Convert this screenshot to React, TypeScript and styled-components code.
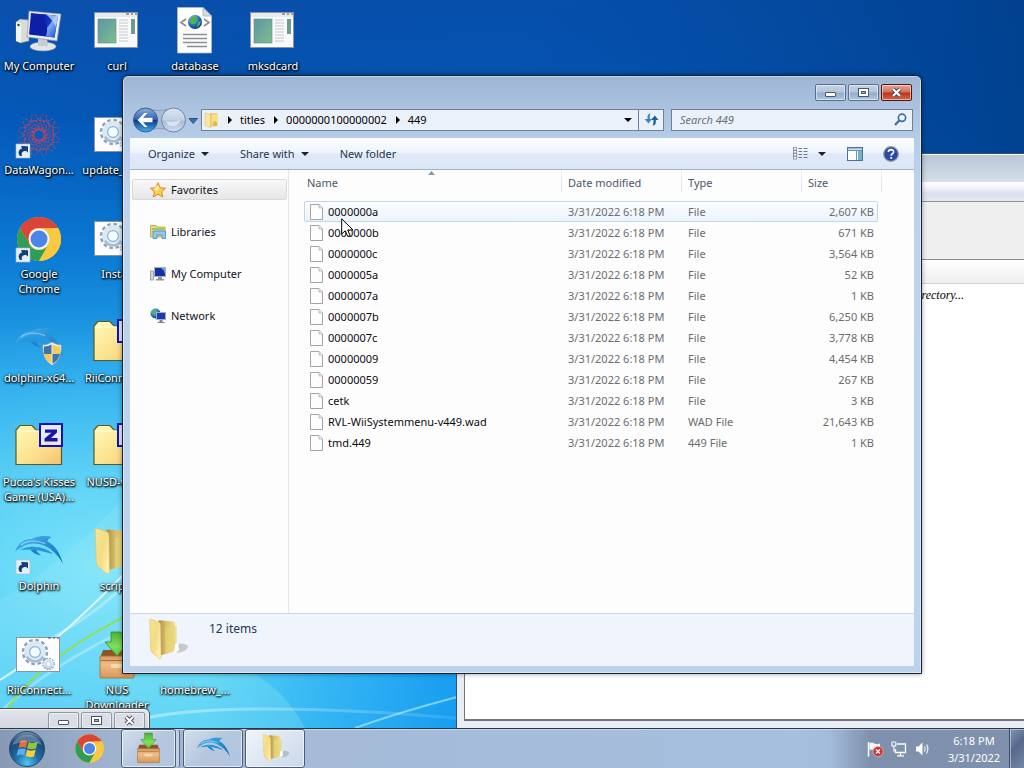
import React from "react";
import styled, { createGlobalStyle, css } from "styled-components";

const GlobalStyle = createGlobalStyle`
  *, *::before, *::after { box-sizing: border-box; }
  body { margin: 0; overflow: hidden; }
  body, button, input { font-family: "Noto Sans", "Open Sans", sans-serif; font-size: 11px; line-height: 15px; }
  button { margin: 0; padding: 0; border: 0; background: none; color: inherit; }
  a { color: inherit; text-decoration: none; }
  svg { display: block; flex: none; overflow: visible; }
`;

/* ---------- desktop ---------- */

const Screen = styled.div`
  display: flex;
  flex-direction: column;
  height: 100vh;
  min-height: 480px;
  overflow: hidden;
`;

const Desktop = styled.main`
  position: relative;
  flex: 1;
  min-height: 0;
  overflow: hidden;
  background: linear-gradient(180deg, #0a50ac 0%, #0558b8 16%, #0a78d2 34%, #27a6ea 52%, #4cc6f4 68%, #55d0f6 82%, #46c8f6 100%);
`;

const Wallpaper = styled.svg`
  position: absolute;
  inset: 0;
  width: 100%;
  height: 100%;
`;

const IconGrid = styled.ul`
  position: relative;
  display: grid;
  grid-auto-columns: 78px;
  grid-auto-rows: 104px;
  margin: 0;
  padding: 8px 0 0;
  list-style: none;
`;

const IconCell = styled.li<{ $col: number; $row: number }>`
  grid-column: ${(p) => p.$col};
  grid-row: ${(p) => p.$row};
`;

const Shortcut = styled.a`
  display: flex;
  flex-direction: column;
  align-items: center;
  gap: 2px;
  color: #fff;
  text-align: center;
  text-shadow: 0 1px 2px #000, 1px 1px 2px #000, 0 0 3px rgba(0, 0, 0, 0.7);
`;

const IconSlot = styled.span`
  display: block;
  width: 48px;
  height: 48px;
`;

const ShortcutLabel = styled.span`
  white-space: pre;
`;

/* ---------- window frames ---------- */

const WindowFrame = styled.section`
  position: absolute;
  display: flex;
  flex-direction: column;
  border: 1px solid #16222f;
  border-radius: 6px 6px 0 0;
`;

const ExplorerFrame = styled(WindowFrame)`
  top: 75px;
  right: 102px;
  bottom: 54px;
  left: 122px;
  padding: 0 7px 7px;
  background: linear-gradient(180deg, #9cb5d3 0, #adc4e0 34px, #b5cce8 62px, #bed2ec 110px, #bdd3ec 100%);
  box-shadow: inset 0 0 0 1px rgba(255, 255, 255, 0.45), 0 0 5px rgba(0, 0, 0, 0.4);
`;

const ConsoleFrame = styled(WindowFrame)`
  top: 153px;
  right: -8px;
  bottom: -1px;
  left: 456px;
  padding: 0 6px 7px 7px;
  border-color: #34506c;
  background: linear-gradient(180deg, #b9c6d6 0, #d5dfea 28px, #dbe3ee 60px, #e9eef4 100%);
  box-shadow: inset 0 1px 0 #fff;
`;

const DownloaderFrame = styled(WindowFrame)`
  bottom: -8px;
  left: -8px;
  width: 158px;
  height: 28px;
  padding: 3px 4px 0;
  border-color: #4b4f57;
  background: linear-gradient(180deg, #e3e5ea, #cdd3dd);
  box-shadow: inset 0 0 0 1px #f6f7f9;
`;

const CaptionButtons = styled.div`
  display: flex;
  justify-content: flex-end;
  gap: 2px;
`;

const CaptionButton = styled.button<{ $tone?: "glass" | "close" | "plain" }>`
  display: flex;
  align-items: center;
  justify-content: center;
  width: 31px;
  height: 17px;
  border: 1px solid #5c6f8a;
  border-radius: 2px;
  box-shadow: inset 0 0 0 1px rgba(255, 255, 255, 0.5);
  background: linear-gradient(180deg, #c4d3e6 0%, #b3c6de 48%, #93abca 52%, #b0c6e2 100%);
  ${(p) =>
    p.$tone === "close" &&
    css`
      border-color: #5a1210;
      background: linear-gradient(180deg, #e3a594 0%, #d0705c 48%, #b8331c 52%, #d2694a 100%);
    `}
  ${(p) =>
    p.$tone === "plain" &&
    css`
      border-color: #9097a4;
      background: #d9dde5;
    `}
`;

/* ---------- explorer ---------- */

const TitleBar = styled.header`
  padding: 8px 2px 0 0;
  height: 32px;
`;

const NavBar = styled.div`
  display: flex;
  align-items: center;
  height: 23px;
  margin: 0 1px 7px 2px;
`;

const HistoryButtons = styled.div`
  display: flex;
  align-items: center;
  width: 69px;
`;

const AddressBar = styled.nav`
  display: flex;
  flex: 1;
  align-items: center;
  height: 22px;
  border: 1px solid #6f8198;
  background: #ebf1fa;
  color: #000;
`;

const Crumbs = styled.ol`
  display: flex;
  flex: 1;
  align-items: center;
  margin: 0;
  padding: 0 0 0 2px;
  list-style: none;
`;

const Crumb = styled.li`
  display: flex;
  align-items: center;
  gap: 8px;
  margin-right: 9px;
`;

const AddressButton = styled.button<{ $divided?: boolean }>`
  display: flex;
  align-items: center;
  justify-content: center;
  width: ${(p) => (p.$divided ? "25px" : "20px")};
  height: 20px;
  border-left: ${(p) => (p.$divided ? "1px solid #6f8198" : "0")};
`;

const SearchBox = styled.label`
  display: flex;
  align-items: center;
  width: 242px;
  height: 22px;
  margin-left: 7px;
  padding: 0 5px 0 8px;
  border: 1px solid #6f8198;
  background: #ebf1fa;
`;

const SearchInput = styled.input`
  flex: 1;
  min-width: 0;
  padding: 0;
  border: 0;
  outline: 0;
  background: transparent;
  &::placeholder { color: #6b727c; font-style: italic; opacity: 1; }
`;

const Toolbar = styled.div`
  display: flex;
  align-items: center;
  height: 32px;
  padding: 0 15px 0 18px;
  border-bottom: 1px solid #a3b2c8;
  background: linear-gradient(180deg, #fbfdff 0%, #eff5fd 46%, #dfe9f7 52%, #dce7f6 100%);
  color: #27374f;
`;

const ToolButton = styled.button`
  display: flex;
  align-items: center;
  gap: 6px;
  margin-right: 31px;
`;

const ToolIcons = styled.div`
  display: flex;
  align-items: center;
  gap: 20px;
  margin-left: auto;
`;

const ViewButton = styled.button`
  display: flex;
  align-items: center;
  gap: 10px;
  margin-right: 1px;
`;

const Body = styled.div`
  display: flex;
  flex: 1;
  min-height: 0;
  background: #fdfdfe;
`;

const Sidebar = styled.nav`
  width: 159px;
  padding: 9px 1px 0 2px;
  border-right: 1px solid #e0e8f2;
`;

const Places = styled.ul`
  display: flex;
  flex-direction: column;
  gap: 21px;
  margin: 0;
  padding: 0;
  list-style: none;
`;

const Place = styled.a<{ $active?: boolean }>`
  display: flex;
  align-items: center;
  gap: 5px;
  height: 21px;
  padding-left: 17px;
  border: 1px solid transparent;
  border-radius: 2px;
  color: #10151c;
  ${(p) =>
    p.$active &&
    css`
      border-color: #d9d9d9;
      background: linear-gradient(180deg, #f8f8f8, #e7e7e7);
    `}
`;

const FileArea = styled.div`
  flex: 1;
  padding-left: 15px;
  overflow: hidden;
`;

const FileTable = styled.table`
  width: 574px;
  table-layout: fixed;
  border-collapse: separate;
  border-spacing: 0;
  color: #6c6c6c;
`;

const HeadCell = styled.th<{ $width: number; $last?: boolean }>`
  position: relative;
  width: ${(p) => p.$width}px;
  height: 31px;
  padding: 4px 6px 11px;
  color: #4d5765;
  font-weight: 400;
  text-align: left;
  &:first-child { padding-left: 3px; }
  &::after {
    content: "";
    position: absolute;
    top: 0;
    right: ${(p) => (p.$last ? "-4px" : "0")};
    width: 1px;
    height: 22px;
    background: linear-gradient(180deg, #eef1f5, #d8dfe8);
  }
`;

const SortMark = styled.svg`
  position: absolute;
  top: 1px;
  left: 48%;
`;

const FileRow = styled.tr<{ $hot?: boolean }>`
  ${(p) =>
    p.$hot &&
    css`
      td {
        border-top: 1px solid #c3d7ea;
        border-bottom: 1px solid #c3d7ea;
        background: linear-gradient(180deg, #fcfdff, #eaf3fc);
      }
      td:first-child { border-left: 1px solid #c3d7ea; border-radius: 2px 0 0 2px; padding-left: 5px; }
      td:last-child { border-right: 1px solid #c3d7ea; border-radius: 0 2px 2px 0; padding-right: 3px; }
    `}
`;

const Cell = styled.td<{ $end?: boolean }>`
  height: 21px;
  padding: 0 4px 0 6px;
  text-align: ${(p) => (p.$end ? "right" : "left")};
  white-space: nowrap;
`;

const FileName = styled.span`
  display: flex;
  align-items: center;
  gap: 5px;
  color: #0c0c0c;
`;

const DetailsPane = styled.footer`
  display: flex;
  height: 53px;
  padding: 0 0 0 18px;
  border-top: 1px solid #ccd6e6;
  background: #f0f4fc;
  color: #25365a;
`;

const DetailsText = styled.p`
  margin: 0;
  padding: 7px 0 0 21px;
  font-size: 12px;
`;

/* ---------- console window ---------- */

const ConsoleTitle = styled.div`
  height: 28px;
`;
const ConsoleMenu = styled.div`
  height: 20px;
  border-bottom: 1px solid #8e929c;
  background: linear-gradient(180deg, #fff 0, #f3f4fa 30%, #dfe0ee 60%, #e6e7f2 100%);
`;
const ConsoleTools = styled.div`
  height: 58px;
  border-bottom: 1px solid #8a8a8a;
  background: #efefef;
`;
const ConsoleTabs = styled.div`
  height: 24px;
  border-bottom: 1px solid #d0d0d0;
  background: linear-gradient(180deg, #fff, #efefef);
`;
const ConsoleBody = styled.div`
  flex: 1;
  padding: 4px 61px 0 0;
  border: solid #6f7680;
  border-width: 0 0 2px 1px;
  background: #fff;
  font-family: "Liberation Serif", serif;
  font-size: 12px;
  font-style: italic;
  text-align: right;
`;

/* ---------- taskbar ---------- */

const Taskbar = styled.footer`
  position: relative;
  display: flex;
  height: 40px;
  border-top: 1px solid #26384c;
  background: linear-gradient(90deg, #8799b4 0, #92a6c2 50px, #9fb3cf 110px, #a5bbd8 310px, #a6bfde 78%, #a3bcdb 81%, #7f90ac 85%, #8091ad 100%);
  box-shadow: inset 0 1px 0 rgba(255, 255, 255, 0.4);
`;

const StartButton = styled.button`
  padding-left: 8px;
`;

const PinnedApp = styled.button`
  padding: 0 16px 0 28px;
`;

const TaskButton = styled.button<{ $active?: boolean; $stacked?: boolean }>`
  display: flex;
  align-items: center;
  justify-content: center;
  width: ${(p) => (p.$stacked ? "55px" : "60px")};
  height: 39px;
  margin-right: ${(p) => (p.$stacked ? "7px" : "2px")};
  border: 1px solid #4c5d75;
  border-radius: 3px;
  background: ${(p) =>
    p.$active
      ? "linear-gradient(135deg, #f1f5fa 0%, #dce6f1 50%, #c9d8ea 100%)"
      : "linear-gradient(135deg, #d3deeb 0%, #b5c7de 50%, #b1c5df 100%)"};
  box-shadow: inset 0 0 0 1px rgba(255, 255, 255, 0.6)
    ${(p) => (p.$stacked ? ", 4px 0 0 -1px #c4d2e4, 5px 0 0 -1px #5a6d87" : "")};
`;

const Tray = styled.div`
  display: flex;
  align-items: center;
  margin-left: auto;
  color: #fff;
`;

const TrayIcons = styled.div`
  display: flex;
  gap: 8px;
`;

const Clock = styled.time`
  width: 70px;
  margin: 0 0 0 8px;
  line-height: 17px;
  text-align: center;
`;

const ShowDesktop = styled.button`
  width: 15px;
  height: 39px;
  border-left: 1px solid #3d4f68;
  background: linear-gradient(135deg, #8195b1 0%, #56698a 45%, #7387a5 100%);
  box-shadow: inset 1px 1px 0 rgba(255, 255, 255, 0.45);
`;

const Pointer = styled.svg`
  position: absolute;
  top: 218px;
  left: 341px;
`;

/* ---------- drawings ---------- */

const Gradients = () => (
  <svg width="0" height="0" style={{ position: "absolute" }} aria-hidden="true">
    <defs>
      <linearGradient id="g-screen" x1="0" y1="0" x2="1" y2="1">
        <stop offset="0" stopColor="#0a1f9c" /><stop offset="0.45" stopColor="#1236c8" /><stop offset="0.5" stopColor="#7fb0f5" /><stop offset="1" stopColor="#1440c8" />
      </linearGradient>
      <linearGradient id="g-app" x1="0" y1="0" x2="1" y2="1">
        <stop offset="0" stopColor="#5f94a8" /><stop offset="1" stopColor="#7cc088" />
      </linearGradient>
      <radialGradient id="g-globe" cx="0.35" cy="0.3" r="0.8">
        <stop offset="0" stopColor="#a8dcf8" /><stop offset="0.5" stopColor="#2474c4" /><stop offset="1" stopColor="#0a2c70" />
      </radialGradient>
      <linearGradient id="g-zip" x1="0" y1="0" x2="1" y2="1">
        <stop offset="0" stopColor="#fffbb8" /><stop offset="0.6" stopColor="#fbe08c" /><stop offset="1" stopColor="#f3c070" />
      </linearGradient>
      <linearGradient id="g-fold-a" x1="0" y1="0" x2="1" y2="0.6">
        <stop offset="0" stopColor="#f6e694" /><stop offset="0.6" stopColor="#f3dc84" /><stop offset="1" stopColor="#fbeeb0" />
      </linearGradient>
      <linearGradient id="g-fold-b" x1="0" y1="0" x2="1" y2="0">
        <stop offset="0" stopColor="#a88c44" /><stop offset="0.45" stopColor="#d8c06a" /><stop offset="1" stopColor="#f0e08c" />
      </linearGradient>
      <linearGradient id="g-dolphin" x1="0" y1="0" x2="1" y2="1">
        <stop offset="0" stopColor="#4ab8f4" /><stop offset="1" stopColor="#0c68b4" />
      </linearGradient>
      <linearGradient id="g-arrow" x1="0" y1="0" x2="0" y2="1">
        <stop offset="0" stopColor="#4fae35" /><stop offset="0.6" stopColor="#7ee05c" /><stop offset="1" stopColor="#5cc443" />
      </linearGradient>
      <linearGradient id="g-crate" x1="0" y1="0" x2="0" y2="1">
        <stop offset="0" stopColor="#d49a60" /><stop offset="0.4" stopColor="#efbd84" /><stop offset="1" stopColor="#d8965a" />
      </linearGradient>
      <radialGradient id="g-orb" cx="0.5" cy="0.9" r="0.9">
        <stop offset="0" stopColor="#4cc8f0" /><stop offset="0.4" stopColor="#1d6aa4" /><stop offset="0.8" stopColor="#1b4470" /><stop offset="1" stopColor="#7d9cbc" />
      </radialGradient>
      <linearGradient id="g-back" x1="0" y1="0" x2="0" y2="1">
        <stop offset="0" stopColor="#8fb0dc" /><stop offset="0.48" stopColor="#2e5fae" /><stop offset="0.52" stopColor="#0b3a8c" /><stop offset="1" stopColor="#40b4ee" />
      </linearGradient>
      <linearGradient id="g-fwd" x1="0" y1="0" x2="0" y2="1">
        <stop offset="0" stopColor="#dbe5f1" /><stop offset="0.5" stopColor="#c1d0e3" /><stop offset="0.55" stopColor="#a9bdd6" /><stop offset="1" stopColor="#cfdef0" />
      </linearGradient>
    </defs>
  </svg>
);

const WallpaperArt = () => (
  <Wallpaper viewBox="0 0 1024 728" preserveAspectRatio="none" aria-hidden="true">
    <defs>
      <linearGradient id="w-top" x1="0" y1="0" x2="1" y2="0">
        <stop offset="0" stopColor="#0048a0" stopOpacity="0" /><stop offset="0.5" stopColor="#0350ac" stopOpacity="0.5" /><stop offset="1" stopColor="#003f8c" stopOpacity="0.9" />
      </linearGradient>
      <radialGradient id="w-glow" cx="0.1" cy="0.78" r="0.35">
        <stop offset="0" stopColor="#8cecfa" stopOpacity="0.75" /><stop offset="1" stopColor="#50d0f8" stopOpacity="0" />
      </radialGradient>
      <linearGradient id="w-sea" x1="0" y1="0" x2="1" y2="0">
        <stop offset="0.2" stopColor="#1a9cf0" stopOpacity="0" /><stop offset="0.45" stopColor="#149af0" stopOpacity="0.95" />
      </linearGradient>
      <linearGradient id="w-beam" x1="0" y1="0" x2="1" y2="0">
        <stop offset="0" stopColor="#fff" stopOpacity="0.4" /><stop offset="1" stopColor="#fff" stopOpacity="0.1" />
      </linearGradient>
    </defs>
    <rect width="1024" height="200" fill="url(#w-top)" />
    <rect width="1024" height="728" fill="url(#w-glow)" />
    <rect y="400" width="1024" height="328" fill="url(#w-sea)" />
    <path d="M0 600Q70 560 130 490V728H0Z" fill="#fff" opacity="0.08" />
    <path d="M120 728V650Q260 640 305 728Z" fill="#a8f4f0" opacity="0.22" />
    <path d="M0 680Q50 650 128 570" fill="none" stroke="#fff" strokeOpacity="0.7" strokeWidth="2" />
    <path d="M36 646Q90 620 130 580" fill="none" stroke="#fff" strokeOpacity="0.3" strokeWidth="3" />
    <path d="M0 712Q50 665 130 628" fill="none" stroke="#fff" strokeOpacity="0.3" strokeWidth="3" />
    <path d="M6 710Q45 655 130 614" fill="none" stroke="#8fe04a" strokeOpacity="0.9" strokeWidth="2" />
    <path d="M145 718Q240 700 456 718" fill="none" stroke="url(#w-beam)" strokeWidth="3" />
    <path d="M355 728Q400 712 457 697" fill="none" stroke="#bff0ff" strokeOpacity="0.6" strokeWidth="2" />
  </Wallpaper>
);

const LinkBadge = () => (
  <g>
    <rect x="1" y="32" width="14" height="14" fill="#e6eefa" stroke="#a8b8cc" strokeWidth="0.6" />
    <path d="M5 44C2.600 41 3.200 37.600 7 36.400L6 34L13 34.200L13 40.600L10.800 38.800C7.600 39.200 6 40.800 7 44Z" fill="#123f7c" />
  </g>
);

const Slot = ({ children }: { children?: React.ReactNode }) => (
  <IconSlot>
    <svg width="48" height="48" viewBox="0 0 48 48" aria-hidden="true">{children}</svg>
  </IconSlot>
);

const ComputerArt = () => (
  <Slot>
    <path d="M1 14L5 11L14 12V33L6 35L1 33Z" fill="#d9dcd8" stroke="#777" strokeWidth="0.6" />
    <path d="M1 14L6 15V35L1 33Z" fill="#f4f4f0" />
    <circle cx="3.500" cy="17" r="1.200" fill="#333" />
    <ellipse cx="28" cy="38.500" rx="13" ry="4.500" fill="#e2e5e8" stroke="#8c949c" strokeWidth="0.6" />
    <path d="M23 30H32L33 38H23Z" fill="#c6ccd4" />
    <path d="M14 3L46 6L42 33L12 29Z" fill="#e8ebee" stroke="#8b949e" strokeWidth="0.7" />
    <path d="M16 5L43 8L39.500 29.500L14 26.500Z" fill="#0c1fa8" />
    <path d="M26 6L43 8L39.500 29.500L31 28.500Q35 17 26 6Z" fill="url(#g-screen)" />
    <path d="M31 6.500L43 8L41 19Q37 11 31 6.500Z" fill="#b9d2fb" opacity="0.8" />
  </Slot>
);

const ProgramArt = () => (
  <Slot>
    <rect x="1.500" y="4.500" width="43" height="35" fill="#f8f9fa" stroke="#8d949c" />
    <rect x="2" y="5" width="42" height="4" fill="#e6e9ee" />
    <path d="M33 6H36M38 6H40M42 6H44" stroke="#555" />
    <rect x="5" y="11" width="18" height="24" fill="url(#g-app)" stroke="#6a8890" strokeWidth="0.6" />
    <path d="M26 12H35M26 15H35M26 18H35M26 21H35M26 24H35M26 27H35M26 30H35M26 33H35" stroke="#c4c7cb" />
    <rect x="38" y="11" width="4" height="15" fill="#6d9c88" />
  </Slot>
);

const WebDocArt = () => (
  <Slot>
    <path d="M6.500 -0.500H32L40.500 8V45H6.500Z" fill="#fdfdfd" stroke="#b4bac2" strokeWidth="0.7" />
    <path d="M32 -0.500V8H40.500Z" fill="#d7dce2" stroke="#9aa2ab" strokeWidth="0.6" />
    <circle cx="24" cy="14" r="7" fill="url(#g-globe)" />
    <path d="M19 11Q23 6 27 9Q24 12 25 15Q21 18 19 14ZM27 14L30 13Q29 18 26 19Z" fill="#52b348" />
    <path d="M15 11L10 14.500L15 18M33 11L38 14.500L33 18" fill="none" stroke="#8a8f94" strokeWidth="1.600" />
    <path d="M12 26.500H36M12 30.500H36M12 34.500H36M16 38.500H36" stroke="#8c9096" strokeWidth="1.500" />
  </Slot>
);

const WagonArt = () => (
  <Slot>
    <g fill="none" stroke="#a8486c" strokeWidth="0.9">
      {[0, 30, 60, 90, 120, 150, 180, 210, 240, 270, 300, 330].map((a) => (
        <g key={a} transform={`rotate(${a} 24 23)`}>
          <path d="M20 2L24 8L28 2" strokeDasharray="3 1" />
          <circle cx="24" cy="12" r="5" strokeDasharray="2 1.500" />
          <path d="M20 12L28 20" />
        </g>
      ))}
      <circle cx="24" cy="23" r="6" stroke="#d43c4c" strokeWidth="1" strokeDasharray="3 1" />
      <circle cx="24" cy="23" r="14.500" stroke="#d84450" strokeWidth="1" strokeDasharray="2 2" />
    </g>
    <LinkBadge />
  </Slot>
);

const Gear = ({ cx, cy, r }: { cx: number; cy: number; r: number }) => (
  <g>
    <circle cx={cx} cy={cy} r={r} fill="none" stroke="#8aa3b8" strokeWidth={r * 0.3} strokeDasharray={`${r * 0.3} ${r * 0.2236}`} />
    <circle cx={cx} cy={cy} r={r * 0.7} fill="none" stroke="#dce9f3" strokeWidth={r * 0.5} />
    <path d={`M${cx - r * 0.7} ${cy + r * 0.4}A${r * 0.8} ${r * 0.8} 0 0 0 ${cx + r * 0.7} ${cy + r * 0.4}`} fill="none" stroke="#a7bbcc" strokeWidth={r * 0.2} />
    <circle cx={cx} cy={cy} r={r * 0.47} fill="#f4fcff" stroke="#86b0d6" strokeWidth={r * 0.1} />
  </g>
);

const BatchArt = () => (
  <Slot>
    <rect x="1.500" y="5.500" width="43" height="34" fill="#fdfdff" stroke="#8d949c" />
    <path d="M33 6H36M38 6H40M42 6H44" stroke="#555" />
    <Gear cx={20} cy={20} r={11.5} />
    <Gear cx={33.5} cy={32} r={5.5} />
  </Slot>
);

const ChromeShape = () => (
  <g>
    <circle cx="24" cy="24" r="22" fill="#f8c843" />
    <path d="M4.950 13A22 22 0 0 1 43.050 13L24 13Q17 13 14.470 18.500L14.470 29.500Z" fill="#db4437" />
    <path d="M4.950 13A22 22 0 0 0 24 46L33.530 29.500A11 11 0 0 1 14.470 29.500Z" fill="#2f9d56" />
    <path d="M43.050 13A22 22 0 0 1 24 46L33.530 29.500Q37 22 31.500 13Z" fill="#fbc93d" />
    <circle cx="24" cy="24" r="10.500" fill="#f4f6f8" />
    <circle cx="24" cy="24" r="8.500" fill="#4a86e8" />
  </g>
);

const ChromeArt = () => (
  <Slot>
    <g transform="translate(0 -1)"><ChromeShape /></g>
    <LinkBadge />
  </Slot>
);

const DolphinShape = () => (
  <g>
    <path d="M0 24C3 15 9 11 17 11C22 8 29 7 37 9C34 10.500 32.500 11.500 32.500 13.500C40 17 45 25 48 36C43 27 37 21 30 18C22 14 12 15 7 19C4 20.500 2 22 0 24Z" fill="url(#g-dolphin)" />
    <path d="M6 17C12 12.500 21 12 30 15.500" fill="none" stroke="#c4edff" strokeWidth="1.200" opacity="0.7" />
    <path d="M5 22C13 17.500 22 18 30 21C33 22 36 24 38 26C30 24 22 21.500 14 21.500C11 21.500 8 22 5 22Z" fill="#2a94dc" />
    <path d="M15 21.500C18 25 22 27 26 27.500C24 25.500 22 24 21 22Z" fill="#1a80cc" />
  </g>
);

const Shield = () => (
  <g>
    <path d="M37 22Q42 25 46.500 25Q47 40 37 45.500Q27 40 27.500 25Q32 25 37 22Z" fill="#e8eef4" stroke="#8593a3" strokeWidth="0.8" />
    <path d="M36.500 24.500V34H29Q28.500 30 29 26.500Q33 26.500 36.500 24.500ZM37.500 34H45Q43.500 40.500 37.500 43.800Z" fill="#3f74a8" />
    <path d="M37.500 24.500V34H45Q45.500 30 45 26.500Q41 26.500 37.500 24.500ZM36.500 34H29Q30.500 40.500 36.500 43.800Z" fill="#f0cc58" />
  </g>
);

const DolphinSetupArt = () => (
  <Slot><g opacity="0.85"><DolphinShape /></g><Shield /></Slot>
);
const DolphinArt = () => (
  <Slot><DolphinShape /><LinkBadge /></Slot>
);

const ZipArt = () => (
  <Slot>
    <path d="M1 6L5 1.500H17L21 6H46.500V40.500H1Z" fill="url(#g-zip)" stroke="#5d5a1c" strokeWidth="1.200" />
    <path d="M2 7H46" stroke="#fffde0" />
    <rect x="25" y="0" width="22" height="22" fill="#e6e9ff" stroke="#1410b8" strokeWidth="2" />
    <path d="M30 5.500H42V8.500L36 14H42.500V17.500H29.500V14.500L36.500 8.700H30Z" fill="#1a14a4" />
  </Slot>
);

const FolderShape = () => (
  <g>
    <path d="M33 39Q44 38 46 32Q46 29 36 28Z" fill="#777" opacity="0.35" />
    <path d="M12 2.500Q12 1.500 14 1.500L29 3Q31 3 31 5V37L14 42Z" fill="url(#g-fold-b)" />
    <path d="M20 10L33 8V35L20 41Z" fill="#e8d678" opacity="0.7" />
    <path d="M2 1Q2 0 4 0.500L13 4Q14.500 5 14.500 8L15 45Q14 47 12 45L5 39Q3.500 38 3 34Z" fill="url(#g-fold-a)" stroke="#d9bf62" strokeWidth="0.6" />
    <path d="M30 39L31 30Q33 26 34.500 30L36 36Z" fill="#fff" />
  </g>
);

const FolderArt = () => (
  <Slot><g transform="scale(1.1 1)"><FolderShape /></g></Slot>
);

const CrateShape = () => (
  <g>
    <path d="M10 18H38L41 26H7Z" fill="#8b5526" />
    <rect x="7" y="24" width="34" height="22" rx="1" fill="url(#g-crate)" stroke="#a86c34" strokeWidth="0.8" />
    <path d="M8 28.500H40" stroke="#a8683a" />
    <rect x="18" y="32" width="12" height="4" rx="1" fill="#f4d9ae" />
    <path d="M18 0H30V10H36L24 24L12 10H18Z" fill="url(#g-arrow)" stroke="#3b8f2a" strokeWidth="0.8" />
  </g>
);

const CrateArt = () => (
  <Slot><CrateShape /></Slot>
);

const CaptionGlyph = ({ kind }: { kind: "min" | "max" | "close" }) => (
  <svg width="13" height="11" viewBox="0 0 13 11" aria-hidden="true">
    {kind === "min" && <rect x="1.500" y="5.500" width="10" height="4" rx="0.500" fill="#fff" stroke="#4a5568" />}
    {kind === "max" && (
      <g><rect x="1.500" y="1.500" width="10" height="8" fill="#fff" stroke="#4a5568" /><rect x="4.500" y="4.500" width="4" height="2" fill="#9fb4d0" stroke="#4a5568" /></g>
    )}
    {kind === "close" && (
      <g><path d="M3 2L10 9M10 2L3 9" stroke="#4a4450" strokeWidth="4" /><path d="M3 2L10 9M10 2L3 9" stroke="#fff" strokeWidth="2.200" /></g>
    )}
  </svg>
);

const HistoryArt = () => (
  <svg width="66" height="26" viewBox="0 0 66 26" aria-hidden="true">
    <path d="M13 2Q27 5 41 2V24Q27 19 13 24Z" fill="#a7bcd6" stroke="#8095b2" strokeWidth="0.8" />
    <circle cx="13.500" cy="13" r="12" fill="url(#g-back)" stroke="#3e5a86" />
    <path d="M5.500 13L12.500 6H15.500L11 10.800H20.500V15.200H11L15.500 20H12.500Z" fill="#fff" />
    <circle cx="41.500" cy="13" r="12" fill="url(#g-fwd)" stroke="#71849e" />
    <path d="M34 14Q41 16 49 13L45 18Q41 20 36 18Z" fill="#e4ecf6" opacity="0.8" />
    <path d="M57 11.500H65.500L61.200 16.500Z" fill="#3777b0" stroke="#1e3c64" strokeWidth="0.8" />
  </svg>
);

const MiniFolder = () => (
  <svg width="15" height="16" viewBox="0 0 15 16" aria-hidden="true">
    <path d="M6 1H13.500V14L6 15Z" fill="#eed06c" />
    <path d="M8 3L14 2V14H8Z" fill="#f7e08c" />
    <path d="M1 1L6.500 2.500V15.500L1 13.500Z" fill="#f9e59c" stroke="#dcb95c" strokeWidth="0.5" />
    <path d="M9 11L11 8.500L13 11V14H9Z" fill="#e5b84a" />
  </svg>
);

const Triangle = ({ dir, color = "#1a2433" }: { dir: "right" | "down"; color?: string }) =>
  dir === "right" ? (
    <svg width="4" height="8" viewBox="0 0 4 8" aria-hidden="true"><path d="M0 0L4 4L0 8Z" fill={color} /></svg>
  ) : (
    <svg width="8" height="4" viewBox="0 0 8 4" aria-hidden="true"><path d="M0 0H8L4 4Z" fill={color} /></svg>
  );

const RefreshArt = () => (
  <svg width="15" height="13" viewBox="0 0 15 13" aria-hidden="true">
    <path d="M6.500 0.500Q3.500 0.500 3.500 4V6H0.500L4.500 10.500L8 6H5.800V4Q5.500 2.500 6.500 0.500Z" fill="#3c86c4" />
    <path d="M8.500 12.500Q11.800 12.500 11.800 9V7H14.500L10.800 2.500L7 7H9.500V9Q9.500 11 8.500 12.500Z" fill="#1f5c9c" />
  </svg>
);

const SearchArt = () => (
  <svg width="13" height="13" viewBox="0 0 13 13" aria-hidden="true">
    <circle cx="8" cy="4.800" r="3.600" fill="#eef6ff" stroke="#3c6ea8" strokeWidth="1.700" />
    <path d="M5.200 7.600L1 12" stroke="#3c6ea8" strokeWidth="2.200" />
  </svg>
);

const DetailsViewArt = () => (
  <svg width="16" height="13" viewBox="0 0 16 13" aria-hidden="true">
    {[0, 3, 6, 9].map((y) => (
      <g key={y}>
        <rect x="1.500" y={y + 0.5} width="3" height="2.500" fill="#fff" stroke="#7d8796" strokeWidth="0.8" />
        <path d={`M6.500 ${y + 1.5}H10M11.500 ${y + 1.5}H15.500`} stroke="#6f7a89" />
      </g>
    ))}
  </svg>
);

const PreviewArt = () => (
  <svg width="16" height="14" viewBox="0 0 16 14" aria-hidden="true">
    <rect x="0.500" y="0.500" width="15" height="13" fill="#fff" stroke="#4d7394" />
    <path d="M1 1.800H15" stroke="#9cbdd4" strokeWidth="1.500" />
    <rect x="11" y="4" width="4" height="9" fill="#6fb4c4" />
    <path d="M9.500 4V13M1 3.500H15" stroke="#6b94b0" />
  </svg>
);

const HelpArt = () => (
  <svg width="16" height="16" viewBox="0 0 16 16" aria-hidden="true">
    <circle cx="8" cy="8" r="7.300" fill="#2b48a4" stroke="#9098a8" strokeWidth="1.300" />
    <path d="M5.300 6Q5.500 3.600 8 3.600Q10.700 3.700 10.600 6Q10.500 7.200 9 8Q8.200 8.500 8.200 9.800" fill="none" stroke="#fff" strokeWidth="1.700" />
    <circle cx="8.200" cy="12" r="1.100" fill="#fff" />
  </svg>
);

const StarArt = () => (
  <svg width="16" height="16" viewBox="0 0 16 16" aria-hidden="true">
    <path d="M8 0.800L10.200 5.800L15.500 6.200L11.500 9.800L12.800 15L8 12.200L3.200 15L4.500 9.800L0.500 6.200L5.800 5.800Z" fill="#fbd04a" stroke="#e0862c" strokeWidth="1" />
    <path d="M8 3L9.400 6.600L6.500 9L4 7Z" fill="#fff2ae" />
  </svg>
);

const LibrariesArt = () => (
  <svg width="16" height="16" viewBox="0 0 16 16" aria-hidden="true">
    <path d="M0.500 1.500H6L7 3H15V13H0.500Z" fill="#efd772" stroke="#b59c40" strokeWidth="0.8" />
    <path d="M2 5H14" stroke="#7cc46c" strokeWidth="1.500" />
    <path d="M3 7H15.500V14.500H12V11H7V14.500H3Z" fill="#8fc8ee" stroke="#4b8cc0" strokeWidth="0.8" />
  </svg>
);

const SmallComputerArt = () => (
  <svg width="16" height="16" viewBox="0 0 16 16" aria-hidden="true">
    <rect x="0.500" y="5" width="3" height="9" fill="#d2d6da" stroke="#83898f" strokeWidth="0.7" />
    <rect x="4.500" y="1.500" width="11" height="9" fill="#1a2ea4" stroke="#a8b0bc" />
    <path d="M11 2L15 2V8Q14 4 11 2Z" fill="#6f98e8" />
    <path d="M8 11H12V13H14V14.500H6V13H8Z" fill="#8d949e" />
  </svg>
);

const NetworkArt = () => (
  <svg width="16" height="16" viewBox="0 0 16 16" aria-hidden="true">
    <circle cx="5.500" cy="5.500" r="5" fill="url(#g-globe)" />
    <path d="M2 3Q5 0 7 2Q5 5 5 8Q2 7 2 3Z" fill="#49b06a" />
    <rect x="6.500" y="4.500" width="9" height="7" fill="#1c38b4" stroke="#a5aebb" />
    <path d="M9.500 12H12.500V14H14.500V15H7.500V14H9.500Z" fill="#7c8490" />
  </svg>
);

const FileArt = () => (
  <svg width="13" height="16" viewBox="0 0 13 16" aria-hidden="true">
    <path d="M0.500 0.500H9L12.500 4V15.500H0.500Z" fill="#fdfdfd" stroke="#9a9a9a" strokeWidth="0.900" />
    <path d="M9 0.500V4H12.500" fill="#e4e4e4" stroke="#b4b4b4" strokeWidth="0.8" />
  </svg>
);

const OrbArt = () => (
  <svg width="38" height="38" viewBox="0 0 38 38" aria-hidden="true">
    <circle cx="19" cy="19" r="17.500" fill="url(#g-orb)" stroke="#2a4868" />
    <path d="M12 12Q15.500 9.500 19.500 11.500L18 18Q14 16 10.500 18.500Z" fill="#ea6c34" />
    <path d="M20.700 12Q24.500 14 29.500 12L28 18.500Q23.500 20 19.200 18.500Z" fill="#8cc83c" />
    <path d="M10 19.700Q14 17.500 17.700 19.300L16.200 25.500Q12.500 23.500 8.500 26Z" fill="#58b0f0" />
    <path d="M19 19.700Q23 21.500 27.700 19.800L26 26.500Q22 28 17.500 26Z" fill="#fbcb38" />
    <path d="M4 15A16 16 0 0 1 34 15Q19 8 4 15Z" fill="#fff" opacity="0.28" />
  </svg>
);

const FlagArt = () => (
  <svg width="16" height="16" viewBox="0 0 16 16" aria-hidden="true">
    <path d="M1.500 1V15.500" stroke="#fff" strokeWidth="1.500" />
    <path d="M2.500 2Q5 1 7.500 2.500T13 2.500V9Q10 10 7.500 9T2.500 9Z" fill="#f4f6fa" />
    <circle cx="11" cy="10.500" r="5" fill="#cf2f2c" stroke="#f0c8c8" strokeWidth="0.6" />
    <path d="M9 8.500L13 12.500M13 8.500L9 12.500" stroke="#fff" strokeWidth="1.500" />
  </svg>
);

const LanArt = () => (
  <svg width="16" height="16" viewBox="0 0 16 16" aria-hidden="true">
    <path d="M6 3H14.500V11.500H4.500V8" fill="none" stroke="#fff" strokeWidth="1.300" />
    <path d="M9.500 12V14.500M6 14.800H13" stroke="#fff" strokeWidth="1.300" />
    <path d="M1 0.500V5H4.800V0.500M2.900 0V2M2.900 5V10H5" fill="none" stroke="#fff" strokeWidth="1.100" />
  </svg>
);

const SoundArt = () => (
  <svg width="16" height="16" viewBox="0 0 16 16" aria-hidden="true">
    <path d="M1 5.500H3.500L7.500 1.500V14.500L3.500 10.500H1Z" fill="#fff" />
    <path d="M9.500 5.500Q11 8 9.500 10.500M11.500 3.500Q14.200 8 11.500 12.500" fill="none" stroke="#eef2f8" strokeWidth="1.200" />
  </svg>
);

/* ---------- data ---------- */

const shortcuts: { col: number; row: number; label: string; art: React.ReactNode }[] = [
  { col: 1, row: 1, label: "My Computer", art: <ComputerArt /> },
  { col: 1, row: 2, label: "DataWagon...", art: <WagonArt /> },
  { col: 1, row: 3, label: "Google\nChrome", art: <ChromeArt /> },
  { col: 1, row: 4, label: "dolphin-x64...", art: <DolphinSetupArt /> },
  { col: 1, row: 5, label: "Pucca's Kisses\nGame (USA)...", art: <ZipArt /> },
  { col: 1, row: 6, label: "Dolphin", art: <DolphinArt /> },
  { col: 1, row: 7, label: "RiiConnect...", art: <BatchArt /> },
  { col: 2, row: 1, label: "curl", art: <ProgramArt /> },
  { col: 2, row: 2, label: "update_nus...", art: <BatchArt /> },
  { col: 2, row: 3, label: "Install", art: <BatchArt /> },
  { col: 2, row: 4, label: "RiiConnect...", art: <ZipArt /> },
  { col: 2, row: 5, label: "NUSD-v19...", art: <ZipArt /> },
  { col: 2, row: 6, label: "scripts", art: <FolderArt /> },
  { col: 2, row: 7, label: "NUS\nDownloader", art: <CrateArt /> },
  { col: 3, row: 1, label: "database", art: <WebDocArt /> },
  { col: 3, row: 7, label: "homebrew_...", art: <Slot /> },
  { col: 4, row: 1, label: "mksdcard", art: <ProgramArt /> },
];

const places = [
  { label: "Favorites", art: <StarArt />, active: true },
  { label: "Libraries", art: <LibrariesArt /> },
  { label: "My Computer", art: <SmallComputerArt /> },
  { label: "Network", art: <NetworkArt /> },
];

const modified = "3/31/2022 6:18 PM";
const files = [
  ["0000000a", "File", "2,607 KB"],
  ["0000000b", "File", "671 KB"],
  ["0000000c", "File", "3,564 KB"],
  ["0000005a", "File", "52 KB"],
  ["0000007a", "File", "1 KB"],
  ["0000007b", "File", "6,250 KB"],
  ["0000007c", "File", "3,778 KB"],
  ["00000009", "File", "4,454 KB"],
  ["00000059", "File", "267 KB"],
  ["cetk", "File", "3 KB"],
  ["RVL-WiiSystemmenu-v449.wad", "WAD File", "21,643 KB"],
  ["tmd.449", "449 File", "1 KB"],
];

const Explorer = () => (
  <ExplorerFrame aria-label="449">
    <TitleBar>
      <CaptionButtons>
        <CaptionButton aria-label="Minimize"><CaptionGlyph kind="min" /></CaptionButton>
        <CaptionButton aria-label="Maximize"><CaptionGlyph kind="max" /></CaptionButton>
        <CaptionButton aria-label="Close" $tone="close"><CaptionGlyph kind="close" /></CaptionButton>
      </CaptionButtons>
    </TitleBar>
    <NavBar>
      <HistoryButtons><button aria-label="Back and forward"><HistoryArt /></button></HistoryButtons>
      <AddressBar aria-label="Address">
        <Crumbs>
          <Crumb><MiniFolder /></Crumb>
          {["titles", "0000000100000002", "449"].map((name) => (
            <Crumb key={name}><Triangle dir="right" color="#000" /><a href="#">{name}</a></Crumb>
          ))}
        </Crumbs>
        <AddressButton aria-label="Previous locations"><Triangle dir="down" color="#000" /></AddressButton>
        <AddressButton aria-label="Refresh" $divided><RefreshArt /></AddressButton>
      </AddressBar>
      <SearchBox>
        <SearchInput type="text" aria-label="Search 449" placeholder="Search 449" />
        <SearchArt />
      </SearchBox>
    </NavBar>
    <Toolbar>
      <ToolButton>Organize <Triangle dir="down" /></ToolButton>
      <ToolButton>Share with <Triangle dir="down" /></ToolButton>
      <ToolButton>New folder</ToolButton>
      <ToolIcons>
        <ViewButton aria-label="Change your view"><DetailsViewArt /><Triangle dir="down" /></ViewButton>
        <button aria-label="Preview pane"><PreviewArt /></button>
        <button aria-label="Help"><HelpArt /></button>
      </ToolIcons>
    </Toolbar>
    <Body>
      <Sidebar aria-label="Places">
        <Places>
          {places.map((p) => (
            <li key={p.label}><Place href="#" $active={p.active}>{p.art}{p.label}</Place></li>
          ))}
        </Places>
      </Sidebar>
      <FileArea>
        <FileTable>
          <thead>
            <tr>
              <HeadCell $width={258}>
                Name
                <SortMark width="7" height="4" viewBox="0 0 7 4"><path d="M0 4L3.500 0L7 4Z" fill="#7d9bb5" /></SortMark>
              </HeadCell>
              <HeadCell $width={120}>Date modified</HeadCell>
              <HeadCell $width={120}>Type</HeadCell>
              <HeadCell $width={76} $last>Size</HeadCell>
            </tr>
          </thead>
          <tbody>
            {files.map(([name, type, size], i) => (
              <FileRow key={name} $hot={i === 0}>
                <Cell><FileName><FileArt />{name}</FileName></Cell>
                <Cell>{modified}</Cell>
                <Cell>{type}</Cell>
                <Cell $end>{size}</Cell>
              </FileRow>
            ))}
          </tbody>
        </FileTable>
      </FileArea>
    </Body>
    <DetailsPane>
      <svg width="40" height="48" viewBox="0 0 46 50" aria-hidden="true"><g transform="translate(0 3)"><FolderShape /></g></svg>
      <DetailsText>12 items</DetailsText>
    </DetailsPane>
  </ExplorerFrame>
);

export default function App() {
  return (
    <Screen>
      <GlobalStyle />
      <Gradients />
      <Desktop>
        <WallpaperArt />
        <IconGrid>
          {shortcuts.map((s) => (
            <IconCell key={`${s.col}-${s.row}`} $col={s.col} $row={s.row}>
              <Shortcut href="#">{s.art}<ShortcutLabel>{s.label}</ShortcutLabel></Shortcut>
            </IconCell>
          ))}
        </IconGrid>
        <ConsoleFrame aria-label="Console">
          <ConsoleTitle />
          <ConsoleMenu />
          <ConsoleTools />
          <ConsoleTabs />
          <ConsoleBody>directory...</ConsoleBody>
        </ConsoleFrame>
        <DownloaderFrame aria-label="NUS Downloader">
          <CaptionButtons>
            <CaptionButton aria-label="Minimize" $tone="plain"><CaptionGlyph kind="min" /></CaptionButton>
            <CaptionButton aria-label="Maximize" $tone="plain"><CaptionGlyph kind="max" /></CaptionButton>
            <CaptionButton aria-label="Close" $tone="plain"><CaptionGlyph kind="close" /></CaptionButton>
          </CaptionButtons>
        </DownloaderFrame>
        <Explorer />
        <Pointer width="13" height="20" viewBox="0 0 13 20" aria-hidden="true">
          <path d="M0.700 0.800V16L4.300 12.800L6.800 18.600L9.200 17.500L6.700 12H12Z" fill="#fff" stroke="#000" strokeWidth="1" />
        </Pointer>
      </Desktop>
      <Taskbar>
        <StartButton aria-label="Start"><OrbArt /></StartButton>
        <PinnedApp aria-label="Google Chrome">
          <svg width="31" height="31" viewBox="0 0 48 48" aria-hidden="true"><ChromeShape /></svg>
        </PinnedApp>
        <TaskButton aria-label="NUS Downloader" $stacked>
          <svg width="31" height="31" viewBox="0 0 48 48" aria-hidden="true"><CrateShape /></svg>
        </TaskButton>
        <TaskButton aria-label="Dolphin">
          <svg width="33" height="33" viewBox="0 0 48 48" aria-hidden="true"><DolphinShape /></svg>
        </TaskButton>
        <TaskButton aria-label="449" $active>
          <svg width="26" height="29" viewBox="0 0 44 48" aria-hidden="true"><FolderShape /></svg>
        </TaskButton>
        <Tray>
          <TrayIcons><FlagArt /><LanArt /><SoundArt /></TrayIcons>
          <Clock>6:18 PM<br />3/31/2022</Clock>
          <ShowDesktop aria-label="Show desktop" />
        </Tray>
      </Taskbar>
    </Screen>
  );
}
